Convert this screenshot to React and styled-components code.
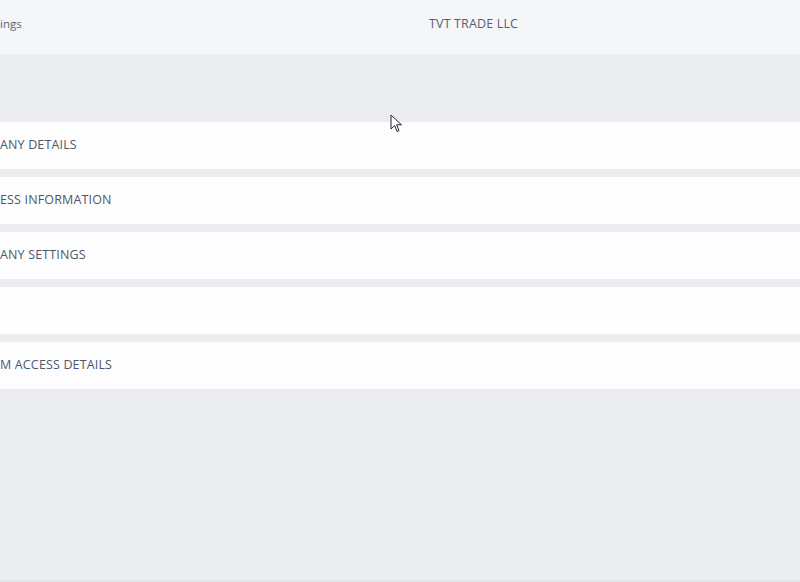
import React from "react";
import styled, { createGlobalStyle } from "styled-components";

const Global = createGlobalStyle`
  html, body { margin: 0; padding: 0; height: 100%; }
  body { background: #ebedf1; font-family: "Open Sans", "Liberation Sans", sans-serif; }
  #root { height: 100%; }
`;

const Page = styled.div`
  width: 800px;
  height: 582px;
  overflow: hidden;
  display: flex;
  flex-direction: column;
  background: #ebedf1;
  box-sizing: border-box;
  border-bottom: 2px solid #e2e5ea;
`;

const Header = styled.header`
  height: 54px;
  flex: none;
  background: #f5f6f8;
  display: grid;
  grid-template-columns: 429px 1fr;
  align-items: center;
  color: #4f5b6d;
`;

const Crumb = styled.span`
  font-size: 11.5px;
  padding-bottom: 8px;
  color: #5a6475;
`;

const Company = styled.span`
  font-size: 12.5px;
  letter-spacing: 0.15px;
  padding-bottom: 8px;
  color: #556173;
`;

const Sections = styled.main`
  display: flex;
  flex-direction: column;
  gap: 8px;
  padding-top: 68px;
`;

const Row = styled.section`
  height: 47px;
  box-sizing: border-box;
  padding-bottom: 2px;
  background: #fcfdfc;
  display: flex;
  align-items: center;
  font-size: 12.5px;
  color: #4d596b;
  letter-spacing: 0.15px;
`;

const Cursor = styled.svg`
  position: absolute;
  left: 390px;
  top: 114px;
`;

const rows = ["ANY DETAILS", "ESS INFORMATION", "ANY SETTINGS", "", "M ACCESS DETAILS"];

export default function App() {
  return (
    <Page>
      <Global />
      <Header>
        <Crumb>ings</Crumb>
        <Company>TVT TRADE LLC</Company>
      </Header>
      <Sections>
        {rows.map((r, i) => (
          <Row key={i}>{r}</Row>
        ))}
      </Sections>
      <Cursor width="14" height="20" viewBox="0 0 14 20">
        <path d="M1 1 L1 15 L4.5 11.5 L7 17.5 L9 16.6 L6.6 10.8 L11.5 10.8 Z" fill="#fff" stroke="#222" strokeWidth="1" strokeLinejoin="miter" />
      </Cursor>
    </Page>
  );
}
